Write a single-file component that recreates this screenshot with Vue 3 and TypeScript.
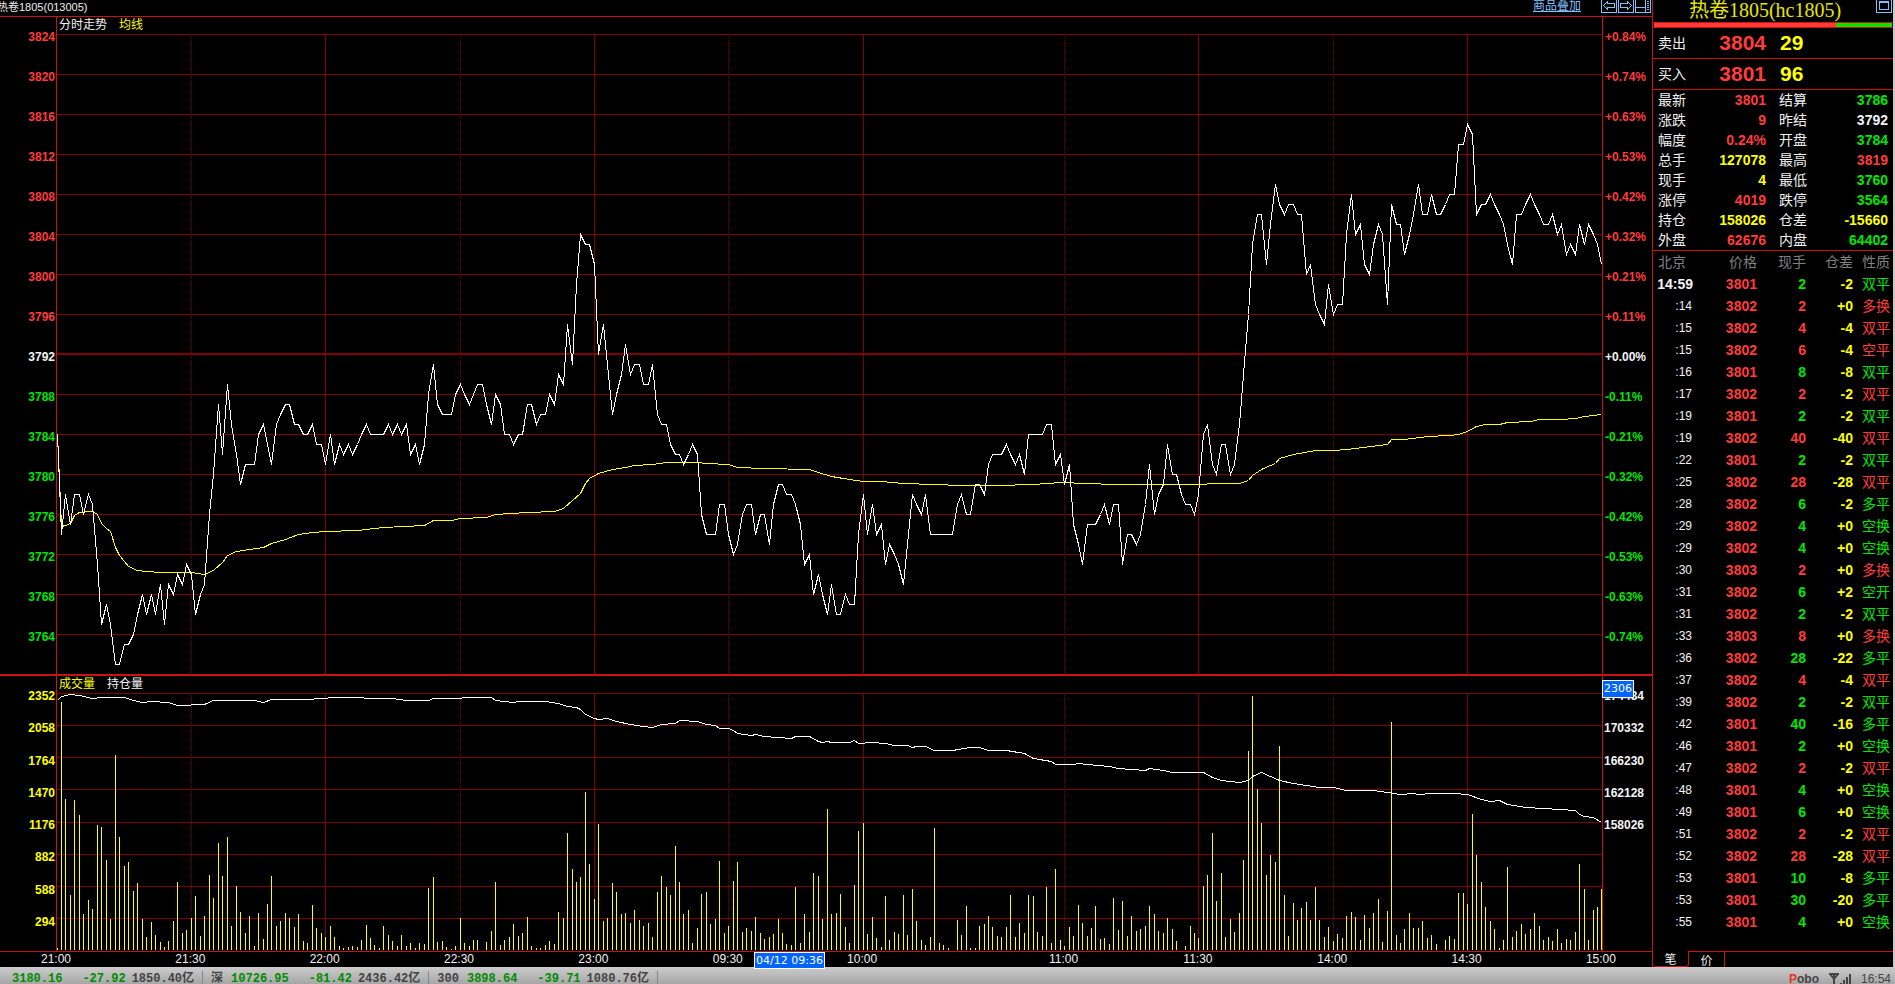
<script setup lang="ts">
type Tone = 'up' | 'down' | 'flat' | 'vol'

interface Quote {
  label: string
  value: string
  tone: Tone
}

interface Tick {
  time: string
  price: number
  lots: number
  lotsTone: Tone
  diff: string
  kind: string
  kindTone: Tone
}

interface Axis {
  text: string
  tone: Tone
}

const MINUTES = 345
const PLOT_W = 1545
const PRICE_H = 640
const VOLUME_H = 258
const TOP_PRICE = 3824
const STEP = PLOT_W / MINUTES

const minuteX = (m: number): number => Math.min(Math.floor(m * STEP), PLOT_W - 1) + 0.5

const prices: number[] = [
  3784, 3774, 3778, 3775, 3778, 3778, 3776, 3778, 3777, 3771, 3765, 3767, 3765, 3761, 3761, 3763, 3763, 3764, 3766, 3768,
  3766, 3768, 3766, 3769, 3765, 3769, 3768, 3770, 3769, 3771, 3770, 3766, 3768, 3769, 3776, 3780, 3787, 3782, 3789, 3785,
  3782, 3779, 3781, 3781, 3781, 3784, 3785, 3783, 3781, 3785, 3786, 3787, 3787, 3785, 3785, 3784, 3784, 3785, 3783, 3783,
  3781, 3784, 3781, 3783, 3782, 3783, 3782, 3783, 3784, 3785, 3784, 3784, 3784, 3784, 3785, 3784, 3785, 3784, 3785, 3782,
  3783, 3781, 3783, 3788, 3791, 3787, 3786, 3786, 3786, 3788, 3789, 3788, 3787, 3788, 3789, 3789, 3787, 3785, 3788, 3787,
  3784, 3784, 3783, 3784, 3784, 3787, 3787, 3785, 3786, 3786, 3788, 3787, 3790, 3789, 3795, 3791, 3799, 3804, 3803, 3803,
  3801, 3792, 3795, 3791, 3786, 3788, 3790, 3793, 3790, 3791, 3791, 3789, 3789, 3791, 3786, 3785, 3785, 3783, 3782, 3782,
  3781, 3782, 3783, 3782, 3776, 3774, 3774, 3774, 3777, 3777, 3774, 3772, 3773, 3776, 3777, 3777, 3774, 3776, 3776, 3773,
  3777, 3779, 3779, 3778, 3778, 3777, 3775, 3771, 3772, 3768, 3770, 3768, 3766, 3769, 3766, 3766, 3768, 3767, 3767, 3774,
  3778, 3774, 3777, 3774, 3775, 3771, 3773, 3772, 3771, 3769, 3773, 3778, 3777, 3776, 3778, 3774, 3774, 3774, 3774, 3774,
  3774, 3777, 3778, 3776, 3776, 3779, 3779, 3778, 3781, 3782, 3782, 3782, 3783, 3782, 3781, 3782, 3780, 3784, 3784, 3784,
  3784, 3785, 3785, 3781, 3782, 3779, 3781, 3775, 3773, 3771, 3775, 3775, 3775, 3776, 3777, 3775, 3777, 3777, 3771, 3774,
  3774, 3773, 3774, 3777, 3781, 3776, 3778, 3779, 3783, 3780, 3780, 3778, 3777, 3777, 3776, 3778, 3784, 3785, 3781, 3780,
  3783, 3783, 3780, 3781, 3785, 3790, 3796, 3803, 3806, 3806, 3801, 3805, 3809, 3807, 3806, 3807, 3807, 3806, 3806, 3800,
  3801, 3797, 3796, 3795, 3799, 3796, 3797, 3797, 3804, 3808, 3804, 3805, 3801, 3800, 3803, 3805, 3804, 3797, 3807, 3805,
  3805, 3802, 3804, 3806, 3809, 3806, 3806, 3808, 3806, 3806, 3807, 3808, 3808, 3813, 3813, 3815, 3814, 3806, 3807, 3807,
  3808, 3807, 3806, 3805, 3803, 3801, 3806, 3806, 3807, 3808, 3807, 3806, 3805, 3805, 3806, 3804, 3805, 3802, 3803, 3802,
  3805, 3803, 3805, 3804, 3803, 3801,
]

/* Bar heights in plot units, one per minute */
const volumes: number[] = [
  2, 248, 151, 55, 150, 135, 36, 50, 41, 125, 123, 90, 31, 195, 113, 84, 88, 59, 67, 31,
  13, 28, 15, 8, 3, 9, 29, 68, 17, 20, 32, 54, 14, 34, 75, 52, 107, 74, 113, 24,
  64, 38, 17, 34, 4, 37, 11, 46, 74, 24, 29, 37, 32, 23, 36, 9, 7, 45, 22, 17,
  13, 24, 13, 4, 2, 3, 4, 3, 10, 25, 12, 5, 2, 24, 15, 9, 4, 15, 4, 7,
  2, 7, 6, 62, 73, 8, 9, 3, 1, 4, 32, 7, 4, 10, 10, 0, 8, 19, 68, 5,
  10, 13, 26, 14, 17, 33, 4, 2, 2, 5, 9, 6, 38, 32, 117, 81, 68, 73, 158, 86,
  51, 126, 29, 32, 67, 58, 36, 37, 27, 40, 30, 24, 27, 13, 58, 74, 63, 55, 104, 68,
  36, 40, 7, 22, 56, 58, 26, 31, 89, 17, 24, 69, 88, 18, 22, 19, 33, 17, 11, 13,
  16, 31, 17, 6, 5, 63, 7, 36, 18, 77, 74, 31, 141, 36, 37, 56, 23, 7, 65, 119,
  127, 16, 33, 12, 3, 54, 10, 18, 16, 55, 15, 61, 29, 10, 5, 13, 122, 7, 5, 2,
  0, 30, 15, 44, 2, 2, 24, 26, 34, 23, 14, 13, 23, 55, 13, 27, 17, 55, 54, 18,
  14, 63, 7, 81, 10, 4, 23, 14, 45, 27, 14, 22, 44, 11, 12, 6, 52, 20, 49, 14,
  34, 19, 21, 24, 44, 36, 19, 17, 32, 21, 9, 0, 4, 24, 17, 12, 64, 75, 117, 49,
  77, 13, 31, 18, 37, 90, 199, 254, 161, 127, 75, 95, 88, 204, 55, 14, 47, 30, 42, 48,
  30, 63, 30, 13, 23, 9, 16, 12, 34, 38, 33, 10, 35, 22, 37, 51, 8, 39, 228, 15,
  7, 21, 37, 22, 22, 29, 12, 15, 6, 0, 10, 14, 11, 57, 57, 46, 136, 95, 68, 43,
  29, 21, 2, 10, 83, 13, 19, 26, 16, 21, 37, 24, 10, 13, 9, 21, 7, 11, 10, 18,
  86, 61, 10, 40, 43, 61,
]

/* [minute, y] pairs in price-plot units */
const average: [number, number][] = [
  [0, 400], [1, 492], [2, 491], [3, 489], [4, 481], [5, 478], [7, 477], [8, 477], [9, 480], [10, 489], [11, 494], [12, 497],
  [13, 513], [14, 521], [15, 527], [16, 532], [18, 536], [20, 537], [23, 538], [30, 538], [33, 540], [35, 536], [37, 528],
  [38, 521], [40, 517], [43, 515], [46, 513], [48, 509], [51, 505], [54, 500], [57, 498], [60, 497], [67, 496], [73, 493],
  [82, 491], [84, 486], [88, 486], [90, 484], [96, 483], [98, 480], [105, 478], [111, 477], [113, 474], [115, 466], [117, 459],
  [118, 449], [119, 444], [121, 439], [124, 435], [127, 433], [129, 431], [133, 430], [136, 428], [143, 428], [145, 429],
  [150, 430], [152, 433], [158, 434], [168, 435], [170, 438], [173, 442], [177, 445], [180, 447], [184, 447], [189, 449],
  [196, 450], [202, 451], [210, 451], [218, 450], [224, 448], [230, 449], [236, 450], [255, 450], [259, 449], [264, 449],
  [266, 446], [267, 441], [269, 435], [271, 431], [272, 429], [273, 424], [276, 420], [281, 416], [285, 416], [288, 415],
  [297, 410], [298, 405], [301, 405], [306, 402], [311, 401], [313, 400], [315, 397], [317, 392], [319, 390], [322, 390],
  [324, 388], [329, 387], [331, 385], [336, 385], [339, 384], [341, 382], [343, 381], [345, 380],
]

/* [minute, y] pairs in volume-plot units */
const interest: [number, number][] = [
  [0, 7], [1, 3], [3, 1], [5, 2], [8, 5], [10, 4], [15, 4], [17, 7], [19, 9], [21, 8], [25, 9], [27, 12], [33, 11], [35, 7],
  [38, 7], [44, 7], [46, 9], [48, 6], [56, 6], [62, 4], [75, 5], [78, 7], [83, 7], [84, 5], [97, 4], [98, 7], [102, 9],
  [103, 8], [109, 8], [112, 10], [114, 13], [116, 14], [117, 16], [118, 21], [120, 25], [121, 26], [123, 25], [125, 28],
  [128, 31], [131, 33], [133, 34], [135, 31], [138, 30], [139, 27], [143, 28], [145, 31], [147, 32], [148, 35], [150, 35],
  [151, 37], [152, 40], [155, 42], [156, 41], [158, 43], [164, 45], [165, 43], [168, 43], [170, 48], [171, 49], [172, 48],
  [173, 49], [177, 49], [178, 47], [179, 50], [182, 49], [185, 50], [187, 52], [190, 52], [191, 54], [192, 53], [194, 53],
  [196, 57], [200, 57], [204, 54], [206, 54], [208, 57], [212, 57], [216, 60], [218, 65], [222, 68], [223, 71], [227, 71],
  [228, 70], [230, 71], [235, 73], [237, 75], [243, 77], [244, 75], [247, 77], [249, 79], [256, 79], [258, 84], [260, 87],
  [264, 89], [266, 87], [267, 83], [269, 79], [271, 83], [273, 87], [276, 90], [279, 92], [282, 94], [285, 94], [288, 97],
  [294, 97], [297, 99], [300, 101], [303, 100], [304, 101], [307, 100], [312, 100], [315, 101], [318, 106], [320, 108],
  [322, 107], [324, 111], [328, 114], [332, 115], [339, 117], [340, 121], [341, 123], [343, 124], [345, 129],
]

const toPoints = (list: [number, number][]): string => list.map(([m, y]) => `${minuteX(m)},${y + 0.5}`).join(' ')

const pricePoints = toPoints(prices.map((p, i): [number, number] => [i, (TOP_PRICE - p) * 10]))
const averagePoints = toPoints(average)
const interestPoints = toPoints(interest)
const volumePath = volumes
  .map((h, i) => (h > 0 ? `M${minuteX(i)} ${VOLUME_H - 1}v${-h}` : ''))
  .join('')

const priceRows = Array.from({ length: 16 }, (_, i) => i * 40 + 0.5).filter((_, i) => i !== 8)
const volumeRows = Array.from({ length: 8 }, (_, i) => Math.floor(i * 32.25) + 0.5)
const solidCols = [60, 120, 180, 255, 315].map(minuteX)
const dottedCols = [30, 90, 150, 225, 285].map(minuteX)

const toneAt = (i: number): Tone => (i < 8 ? 'up' : i === 8 ? 'flat' : 'down')
const priceAxis: Axis[] = Array.from({ length: 16 }, (_, i) => ({ text: String(TOP_PRICE - i * 4), tone: toneAt(i) }))
const percentAxis: Axis[] = Array.from({ length: 16 }, (_, i) => {
  const pct = ((32 - i * 4) / 3792) * 100
  return { text: `${pct < 0 ? '-' : '+'}${Math.abs(pct).toFixed(2)}%`, tone: toneAt(i) }
})
const volumeAxis = [2352, 2058, 1764, 1470, 1176, 882, 588, 294]
const interestAxis = [174434, 170332, 166230, 162128, 158026]

const timeAxis = [
  { text: '21:00', span: 30 },
  { text: '21:30', span: 30 },
  { text: '22:00', span: 30 },
  { text: '22:30', span: 30 },
  { text: '23:00', span: 30 },
  { text: '09:30', span: 30 },
  { text: '10:00', span: 45 },
  { text: '11:00', span: 30 },
  { text: '11:30', span: 30 },
  { text: '14:00', span: 30 },
  { text: '14:30', span: 30 },
  { text: '15:00', span: 0 },
]

const cursorLeft = `${(697 / PLOT_W) * 100}%`
const askShare = '76.3%'

const q = (label: string, value: string, tone: Tone): Quote => ({ label, value, tone })
const quotes: [Quote, Quote][] = [
  [q('最新', '3801', 'up'), q('结算', '3786', 'down')],
  [q('涨跌', '9', 'up'), q('昨结', '3792', 'flat')],
  [q('幅度', '0.24%', 'up'), q('开盘', '3784', 'down')],
  [q('总手', '127078', 'vol'), q('最高', '3819', 'up')],
  [q('现手', '4', 'vol'), q('最低', '3760', 'down')],
  [q('涨停', '4019', 'up'), q('跌停', '3564', 'down')],
  [q('持仓', '158026', 'vol'), q('仓差', '-15660', 'vol')],
  [q('外盘', '62676', 'up'), q('内盘', '64402', 'down')],
]

const rawTicks: [string, number, number, string, string, 'r' | 'g'][] = [
  ['14:59', 3801, 2, '-2', '双平', 'g'],
  [':14', 3802, 2, '+0', '多换', 'r'],
  [':15', 3802, 4, '-4', '双平', 'r'],
  [':15', 3802, 6, '-4', '空平', 'r'],
  [':16', 3801, 8, '-8', '双平', 'g'],
  [':17', 3802, 2, '-2', '双平', 'r'],
  [':19', 3801, 2, '-2', '双平', 'g'],
  [':19', 3802, 40, '-40', '双平', 'r'],
  [':22', 3801, 2, '-2', '双平', 'g'],
  [':25', 3802, 28, '-28', '双平', 'r'],
  [':28', 3802, 6, '-2', '多平', 'g'],
  [':29', 3802, 4, '+0', '空换', 'g'],
  [':29', 3802, 4, '+0', '空换', 'g'],
  [':30', 3803, 2, '+0', '多换', 'r'],
  [':31', 3802, 6, '+2', '空开', 'g'],
  [':31', 3802, 2, '-2', '双平', 'g'],
  [':33', 3803, 8, '+0', '多换', 'r'],
  [':36', 3802, 28, '-22', '多平', 'g'],
  [':37', 3802, 4, '-4', '双平', 'r'],
  [':39', 3802, 2, '-2', '双平', 'g'],
  [':42', 3801, 40, '-16', '多平', 'g'],
  [':46', 3801, 2, '+0', '空换', 'g'],
  [':47', 3802, 2, '-2', '双平', 'r'],
  [':48', 3801, 4, '+0', '空换', 'g'],
  [':49', 3801, 6, '+0', '空换', 'g'],
  [':51', 3802, 2, '-2', '双平', 'r'],
  [':52', 3802, 28, '-28', '双平', 'r'],
  [':53', 3801, 10, '-8', '多平', 'g'],
  [':53', 3801, 30, '-20', '多平', 'g'],
  [':55', 3801, 4, '+0', '空换', 'g'],
]
const ticks: Tick[] = rawTicks.map(([time, price, lots, diff, kind, c]) => {
  const tone: Tone = c === 'r' ? 'up' : 'down'
  return { time, price, lots, lotsTone: tone, diff, kind, kindTone: tone }
})

const indices = [
  { name: '', price: '3180.16', change: '-27.92', amount: '1850.40亿' },
  { name: '深', price: '10726.95', change: '-81.42', amount: '2436.42亿' },
  { name: '300', price: '3898.64', change: '-39.71', amount: '1080.76亿' },
]
</script>

<template>
  <div class="terminal">
    <div class="workspace">
      <main class="chart">
        <header class="chart-head">
          <span class="symbol">热卷1805(013005)</span>
          <nav class="tools">
            <a href="#overlay" class="overlay">商品叠加</a>
            <button type="button" class="tool" aria-label="向左">
              <svg width="14" height="12" viewBox="0 0 14 12"><path d="M1.5 5.5L5.500 1.500V3.500H12.500V7.500H5.500V9.500Z" /></svg>
            </button>
            <button type="button" class="tool" aria-label="向右">
              <svg width="14" height="12" viewBox="0 0 14 12"><path d="M12.500 5.500L8.500 1.500V3.500H1.500V7.500H8.500V9.500Z" /></svg>
            </button>
            <button type="button" class="tool" aria-label="布局">
              <svg width="14" height="12" viewBox="0 0 14 12">
                <path d="M0 7.500H9M9.500 0V12M11 1.500H13M11 3.500H13M11 5.500H13M11 7.500H13M11 9.500H13" />
              </svg>
            </button>
          </nav>
        </header>

        <section class="panel price-panel">
          <ul class="scale left">
            <li v-for="a in priceAxis" :key="a.text" :class="a.tone">{{ a.text }}</li>
          </ul>
          <div class="plot">
            <div class="legend"><span class="flat">分时走势</span><span class="vol">均线</span></div>
            <svg class="canvas" :viewBox="`0 0 ${PLOT_W} ${PRICE_H}`" preserveAspectRatio="none">
              <line v-for="y in priceRows" :key="'r' + y" class="grid" x1="0" :x2="PLOT_W" :y1="y" :y2="y" />
              <line class="grid base" x1="0" :x2="PLOT_W" y1="320" y2="320" />
              <line v-for="x in solidCols" :key="'s' + x" class="grid" :x1="x" :x2="x" y1="0" :y2="PRICE_H" />
              <line v-for="x in dottedCols" :key="'d' + x" class="grid dotted" :x1="x" :x2="x" y1="2" :y2="PRICE_H" />
              <polyline class="line average" :points="averagePoints" />
              <polyline class="line" :points="pricePoints" />
            </svg>
          </div>
          <ul class="scale right percent">
            <li v-for="a in percentAxis" :key="a.text" :class="a.tone">{{ a.text }}</li>
          </ul>
        </section>

        <section class="panel volume-panel">
          <ul class="scale left">
            <li v-for="v in volumeAxis" :key="v" class="vol">{{ v }}</li>
          </ul>
          <div class="plot">
            <div class="legend"><span class="vol">成交量</span><span class="flat">持仓量</span></div>
            <svg class="canvas" :viewBox="`0 0 ${PLOT_W} ${VOLUME_H}`" preserveAspectRatio="none">
              <line v-for="y in volumeRows" :key="'r' + y" class="grid" x1="0" :x2="PLOT_W" :y1="y" :y2="y" />
              <line v-for="x in solidCols" :key="'s' + x" class="grid" :x1="x" :x2="x" y1="0" :y2="VOLUME_H" />
              <line v-for="x in dottedCols" :key="'d' + x" class="grid dotted" :x1="x" :x2="x" y1="2" :y2="VOLUME_H" />
              <path class="line average" :d="volumePath" />
              <polyline class="line" :points="interestPoints" />
            </svg>
          </div>
          <ul class="scale right">
            <li v-for="v in interestAxis" :key="v" class="flat">{{ v }}</li>
          </ul>
          <span class="marker level">2306</span>
        </section>

        <footer class="time-axis">
          <span v-for="t in timeAxis" :key="t.text" class="time" :style="{ flexGrow: t.span }">
            <span class="time-text">{{ t.text }}</span>
          </span>
          <span class="marker moment" :style="{ left: cursorLeft }">04/12 09:36</span>
        </footer>
      </main>

      <aside class="side">
        <header class="side-head">
          <h1>热卷1805(hc1805)</h1>
          <button type="button" class="tool restore" aria-label="还原窗口">
            <svg width="14" height="12" viewBox="0 0 14 12"><path d="M2.500 1.500H11.500V9.500H2.500ZM2 2.500H12" /></svg>
          </button>
        </header>
        <div class="depth"><span class="ask" :style="{ width: askShare }"></span></div>
        <div class="offer"><span>卖出</span><b class="up">3804</b><b class="vol">29</b></div>
        <div class="offer"><span>买入</span><b class="up">3801</b><b class="vol">96</b></div>

        <table class="quotes">
          <colgroup><col class="q-name" /><col /><col class="q-name2" /><col class="q-val2" /></colgroup>
          <tbody>
            <tr v-for="(row, i) in quotes" :key="i">
              <template v-for="c in row" :key="c.label">
                <th scope="row">{{ c.label }}</th>
                <td :class="c.tone">{{ c.value }}</td>
              </template>
            </tr>
          </tbody>
        </table>

        <table class="ticks">
          <colgroup><col class="t-time" /><col /><col class="t-lots" /><col class="t-diff" /><col class="t-kind" /></colgroup>
          <thead>
            <tr>
              <th scope="col" class="first">北京</th>
              <th scope="col">价格</th>
              <th scope="col">现手</th>
              <th scope="col">仓差</th>
              <th scope="col">性质</th>
            </tr>
          </thead>
          <tbody>
            <tr v-for="(t, i) in ticks" :key="i">
              <td class="flat" :class="{ sec: i > 0 }">{{ t.time }}</td>
              <td class="up">{{ t.price }}</td>
              <td :class="t.lotsTone">{{ t.lots }}</td>
              <td class="vol">{{ t.diff }}</td>
              <td class="kind" :class="t.kindTone">{{ t.kind }}</td>
            </tr>
          </tbody>
        </table>

        <nav class="tabs">
          <button type="button" class="tab active">笔</button>
          <button type="button" class="tab">价</button>
          <span class="tab-rest"></span>
        </nav>
      </aside>
    </div>

    <footer class="status">
      <div v-for="ix in indices" :key="ix.price" class="index">
        <span v-if="ix.name" class="ix-name">{{ ix.name }}</span>
        <span class="ix-price">{{ ix.price }}</span>
        <span class="ix-change">{{ ix.change }}</span>
        <span class="ix-amount">{{ ix.amount }}</span>
      </div>
      <div class="system">
        <span class="brand"><i>P</i>obo</span>
        <svg class="signal" width="22" height="14" viewBox="0 0 22 14">
          <path d="M0 1H10M1 1L5 6L9 1M5 1V14" fill="none" stroke="#444" stroke-width="2" />
          <path d="M11 10h2v4h-2zM14 7h2v7h-2zM17 4h2v10h-2zM20 1h2v13h-2z" fill="#444" />
        </svg>
        <time>16:54</time>
      </div>
    </footer>
  </div>
</template>

<style>
html,
body {
  margin: 0;
  background: #000;
}
</style>

<style scoped>
.terminal {
  --line: #c8140a;
  --grid: #800000;
  --blue: #80c0ff;
  display: flex;
  flex-direction: column;
  height: 100vh;
  overflow: hidden;
  background: #000;
  color: #f0f0f0;
  font: 12px/14px "Liberation Sans", "Noto Sans CJK SC", sans-serif;
}
.up { color: #ff3c3c; }
.down { color: #00e600; }
.flat { color: #f4f4f4; }
.vol { color: #ffff00; }

.workspace {
  flex: 1;
  min-height: 0;
  display: flex;
}
.chart {
  flex: 1;
  min-width: 0;
  display: flex;
  flex-direction: column;
}
.chart-head {
  display: flex;
  justify-content: space-between;
  height: 16px;
  border-bottom: 1px solid var(--line);
}
.symbol {
  margin-left: -3px;
  font-size: 11px;
}
.tools {
  display: flex;
  align-items: flex-start;
  gap: 1px;
  padding-right: 1px;
}
.overlay {
  margin-right: 19px;
  color: var(--blue);
  line-height: 13px;
}
.tool {
  box-sizing: border-box;
  width: 16px;
  height: 13px;
  padding: 0;
  border: 1px solid var(--blue);
  border-top: 0;
  background: transparent;
}
.tool svg {
  display: block;
  fill: none;
  stroke: var(--blue);
  shape-rendering: crispEdges;
}

.panel {
  position: relative;
  display: grid;
  grid-template-columns: 56px minmax(0, 1fr) 49px;
  min-height: 0;
}
.price-panel {
  flex: 657 1 0;
  border-bottom: 2px solid var(--line);
}
.volume-panel {
  flex: 275 1 0;
  border-bottom: 1px solid var(--line);
}
.plot {
  display: flex;
  flex-direction: column;
  min-height: 0;
  border: solid var(--line);
  border-width: 0 1px;
}
.legend {
  display: flex;
  gap: 12px;
  height: 17px;
  padding-left: 2px;
  line-height: 17px;
}
.canvas {
  display: block;
  flex: 1;
  min-height: 0;
  width: 100%;
  shape-rendering: crispEdges;
}
.grid { stroke: var(--grid); }
.base { stroke-width: 2; }
.dotted { stroke-dasharray: 1 1; }
.line {
  fill: none;
  stroke: #fff;
}
.average { stroke: #ffff00; }

.scale {
  display: grid;
  grid-auto-rows: minmax(0, 1fr);
  margin: 0;
  padding: 13px 0 4px;
  list-style: none;
  font-weight: bold;
}
.price-panel .scale { grid-template-rows: repeat(16, minmax(0, 1fr)); }
.volume-panel .scale { grid-template-rows: repeat(8, minmax(0, 1fr)); }
.scale.left {
  padding-right: 1px;
  text-align: right;
}
.scale.right { padding-left: 1px; }
.scale.percent { padding-left: 2px; }

.marker {
  position: absolute;
  box-sizing: border-box;
  padding: 0 1px;
  border: 1px solid #fff;
  background: #0064ff;
  color: #fff;
  font: 11px/16px "DejaVu Sans", sans-serif;
  white-space: nowrap;
}
.level {
  top: 4px;
  right: 18px;
}
.moment {
  top: 0;
  line-height: 15px;
}
.time-axis {
  position: relative;
  display: flex;
  height: 15px;
  margin: 0 50px 0 57px;
}
.time {
  flex: 0 0 0;
  width: 0;
}
.time-text {
  display: block;
  width: 32px;
  margin-left: -17px;
  text-align: center;
}

.side {
  box-sizing: border-box;
  display: flex;
  flex-direction: column;
  width: 243px;
  border-left: 1px solid var(--line);
  border-right: 2px solid #d0c8c8;
}
.side-head {
  position: relative;
  height: 22px;
  border-bottom: 1px solid var(--line);
}
h1 {
  margin: 0;
  padding-right: 16px;
  color: #e6e600;
  font: 20px/20px "Liberation Serif", "Noto Sans CJK SC", serif;
  text-align: center;
}
.restore {
  position: absolute;
  top: 0;
  right: 1px;
}
.depth {
  height: 4px;
  margin: 0 1px;
  background: #00e600;
}
.ask {
  display: block;
  height: 100%;
  background: #ff3c3c;
}
.offer {
  display: grid;
  grid-template-columns: 40px 73px 1fr;
  align-items: center;
  height: 30px;
  border-top: 1px solid var(--line);
  font-size: 14px;
}
.offer span { padding-left: 5px; }
.offer b {
  font-size: 21px;
  line-height: 30px;
}
.offer b:nth-child(2) { text-align: right; }
.offer b:nth-child(3) { padding-left: 14px; }

table {
  width: 100%;
  border-collapse: separate;
  border-spacing: 0;
  border-top: 1px solid var(--line);
  table-layout: fixed;
  font-size: 14px;
}
th,
td {
  padding: 0;
  text-align: right;
  white-space: nowrap;
}
th { font-weight: normal; }
td { font-weight: bold; }
.quotes tr { height: 20px; }
.quotes th,
.quotes td { line-height: 20px; }
.quotes th {
  padding-left: 5px;
  text-align: left;
}
.quotes th:nth-child(3) { padding-left: 13px; }
.quotes td:last-child { padding-right: 5px; }
.q-name { width: 40px; }
.q-name2 { width: 48px; }
.q-val2 { width: 79px; }

.ticks tr { height: 22px; }
.ticks th,
.ticks td { line-height: 22px; }
.ticks th { color: #808080; }
.ticks .first {
  padding-left: 5px;
  text-align: left;
}
.ticks .sec {
  padding-right: 1px;
  font-size: 12px;
  font-weight: normal;
}
.ticks .kind { font-weight: normal; }
.ticks th:last-child,
.ticks .kind { padding-right: 3px; }
.t-time { width: 40px; }
.t-lots { width: 49px; }
.t-diff { width: 47px; }
.t-kind { width: 40px; }

.tabs {
  display: flex;
  height: 16px;
  margin-top: auto;
}
.tab {
  box-sizing: border-box;
  width: 36px;
  padding: 0;
  border: 0 solid var(--line);
  border-width: 1px 1px 0 0;
  background: transparent;
  color: #f0f0f0;
  font: 12px/14px "Noto Sans CJK SC", sans-serif;
}
.tab.active {
  border-width: 0 1px 1px 0;
  border-radius: 0 0 3px 3px;
}
.tab-rest {
  flex: 1;
  border-top: 1px solid var(--line);
}

.status {
  display: flex;
  height: 17px;
  padding-left: 12px;
  overflow: hidden;
  background: linear-gradient(#cccccc, #a6a6a6);
  color: #444;
  font: bold 12px/16px "Liberation Mono", "Noto Sans CJK SC", monospace;
}
.index {
  display: flex;
  height: 16px;
  margin-top: 4px;
  padding-right: 8px;
  border-right: 1px solid #888;
  white-space: nowrap;
}
.index + .index { padding-left: 8px; }
.ix-name { margin-right: 8px; }
.ix-price { color: #008c00; }
.ix-change {
  margin: 0 6px 0 20px;
  color: #008c00;
}
.system {
  display: flex;
  gap: 10px;
  margin: 4px 4px 0 auto;
  font: 12px/16px "Liberation Sans", sans-serif;
}
.brand { font-weight: bold; }
.brand i {
  color: #f03020;
  font-style: normal;
}
.signal { margin-top: 2px; }
</style>
